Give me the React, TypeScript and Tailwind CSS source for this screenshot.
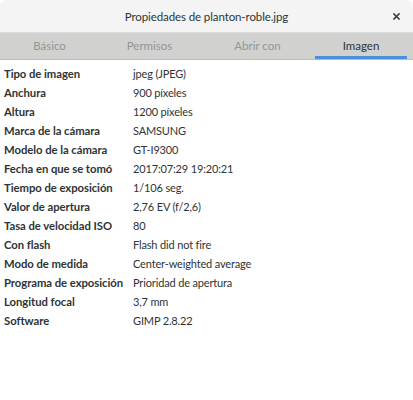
import React from "react";

const rows: [string, string][] = [
  ["Tipo de imagen", "jpeg (JPEG)"],
  ["Anchura", "900 píxeles"],
  ["Altura", "1200 píxeles"],
  ["Marca de la cámara", "SAMSUNG"],
  ["Modelo de la cámara", "GT-I9300"],
  ["Fecha en que se tomó", "2017:07:29 19:20:21"],
  ["Tiempo de exposición", "1/106 seg."],
  ["Valor de apertura", "2,76 EV (f/2,6)"],
  ["Tasa de velocidad ISO", "80"],
  ["Con flash", "Flash did not fire"],
  ["Modo de medida", "Center-weighted average"],
  ["Programa de exposición", "Prioridad de apertura"],
  ["Longitud focal", "3,7 mm"],
  ["Software", "GIMP 2.8.22"],
];

const tabs: { label: string; w: string }[] = [
  { label: "Básico", w: "w-[99px]" },
  { label: "Permisos", w: "w-[101px]" },
  { label: "Abrir con", w: "w-[115px]" },
  { label: "Imagen", w: "w-[92px]" },
];

export default function App() {
  return (
    <div
      className="w-[413px] h-[400px] bg-white overflow-hidden text-[#2e3436]"
      style={{ fontFamily: 'Lato, "Noto Sans", sans-serif' }}
    >
      <div className="h-[33px] bg-[#f4f4f4] rounded-t-[6px] border-b border-[#dadada] flex items-center relative">
        <div className="flex-1 text-center text-[11.5px] tracking-[-0.1px] text-[#2e3436] pt-[1px]">Propiedades de planton-roble.jpg</div>
        <div className="absolute right-[13px] top-[13px]">
          <svg width="7" height="7" viewBox="0 0 7 7">
            <path d="M1 1 L6 6 M6 1 L1 6" stroke="#3d3d3d" strokeWidth="1.6" strokeLinecap="square" />
          </svg>
        </div>
      </div>
      <div className="h-[27px] bg-[#d1d1cf] border-b border-[#bcbcbc] flex text-[11.5px]">
        {tabs.map((t, i) => (
          <div key={t.label} className={`${t.w} flex flex-col`}>
            <div className={`flex-1 flex items-center justify-center pt-[2px] ${i === 3 ? "text-[#2e3436]" : "text-[#939595]"}`}>{t.label}</div>
            <div className={`h-[3px] ${i === 3 ? "bg-[#4a90d9]" : ""}`} />
          </div>
        ))}
      </div>
      <div className="pt-[5px] pl-[4px] flex flex-col">
        {rows.map(([k, v]) => (
          <div key={k} className="flex h-[19px] items-center">
            <div className="w-[129px] font-bold whitespace-nowrap text-[11.3px] tracking-[-0.05px]">{k}</div>
            <div className="whitespace-nowrap text-[11px] tracking-[-0.15px]">{v}</div>
          </div>
        ))}
      </div>
    </div>
  );
}
